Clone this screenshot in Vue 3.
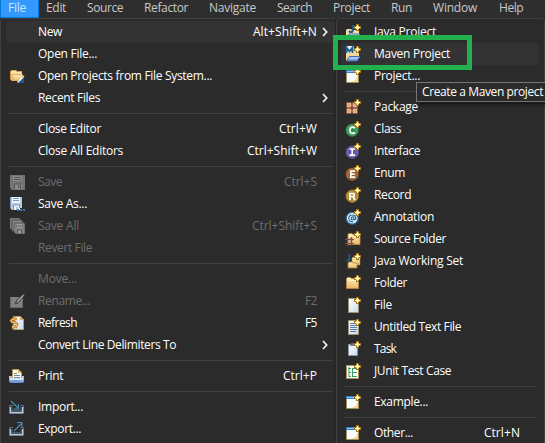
<script setup>
const menus = [
  ['File', 18, 8], ['Edit', 20, 46], ['Source', 36, 87], ['Refactor', 44, 144], ['Navigate', 47, 209], ['Search', 35, 277],
  ['Project', 37, 333], ['Run', 21, 391], ['Window', 44, 433], ['Help', 24, 499]
].map(([text, width, x], i, all) => ({ text, width, gap: i ? x - all[i - 1][2] - all[i - 1][1] : x }))

const item = (text, width, icon, keys, keysWidth, extra) => ({ text, width, icon, keys, keysWidth, ...extra })
const sep = { separator: true }
const off = { disabled: true }
const sub = { submenu: true }

const fileMenu = [
  item('New', 24, '', 'Alt+Shift+N', 64, { submenu: true, active: true }),
  item('Open File...', 59),
  item('Open Projects from File System...', 174, 'openFolder'),
  item('Recent Files', 62, '', '', 0, sub),
  sep,
  item('Close Editor', 63, '', 'Ctrl+W', 38),
  item('Close All Editors', 85, '', 'Ctrl+Shift+W', 70),
  sep,
  item('Save', 24, 'save', 'Ctrl+S', 33, off),
  item('Save As...', 49, 'saveAs'),
  item('Save All', 41, 'saveAll', 'Ctrl+Shift+S', 65, off),
  item('Revert File', 54, '', '', 0, off),
  sep,
  item('Move...', 39, '', '', 0, off),
  item('Rename...', 52, 'rename', 'F2', 12, off),
  item('Refresh', 39, 'refresh', 'F5', 12),
  item('Convert Line Delimiters To', 138, '', '', 0, sub),
  sep,
  item('Print', 25, 'print', 'Ctrl+P', 34),
  sep,
  item('Import...', 45, 'import'),
  item('Export...', 43, 'export')
]

const newMenu = [
  item('Java Project', 62, 'java'),
  item('Maven Project', 76, 'maven', '', 0, { active: true }),
  item('Project...', 46, 'window'),
  sep,
  item('Package', 44, 'package'),
  item('Class', 27, 'class'),
  item('Interface', 46, 'interface'),
  item('Enum', 31, 'enum'),
  item('Record', 37, 'record'),
  item('Annotation', 60, 'annotation'),
  item('Source Folder', 72, 'source'),
  item('Java Working Set', 89, 'workingSet'),
  item('Folder', 33, 'folder'),
  item('File', 18, 'file'),
  item('Untitled Text File', 87, 'text'),
  item('Task', 22, 'task'),
  item('JUnit Test Case', 77, 'junit'),
  sep,
  item('Example...', 54, 'window'),
  sep,
  item('Other...', 39, 'window', 'Ctrl+N', 36)
]

const plus = '<path d="M11 0h3v2h2v3h-2v2h-3v-2h-2v-3h2z" fill="#a07822"/><path d="M12 1h1v2h2v1h-2v2h-1v-2h-2v-1h2z" fill="#fffbe0"/><path d="M11 2h1v1h-1zM13 2h1v1h-1zM11 4h1v1h-1zM13 4h1v1h-1z" fill="#f0d27a"/>'
const ball = (fill, edge, glyph) =>
  `<circle cx="7.2" cy="9.2" r="6.2" fill="url(#${fill})" stroke="${edge}" stroke-width=".8"/><path d="${glyph}" fill="none" stroke="#fff" stroke-width="1.7"/>${plus}`
const folder = '<path d="M1.5 3.5l1-1h3l1 1h7v10h-12z" fill="url(#gold)" stroke="#c08a42" stroke-width=".8"/><path d="M2 5.5h11" stroke="#fff0bd"/>'
const page = '<path d="M3.5 1.5h10v14h-10z" fill="url(#paper)" stroke="#9c946f"/>'
const floppy = '<path d="M1 1h15v15h-13l-2-2z" fill="#747474"/><path d="M4 2h9v5h-9zM5 10h8v5h-8z" fill="#8b8b8b"/><path d="M5 3.5h7M5 5.5h7M5.5 15v-5h6v5M9.5 11v3" fill="none" stroke="#555"/>'

const icons = {
  openFolder: '<path d="M1 3h1l1-1h4l1 1h5v10h-10l-2-2z" fill="url(#gold)"/><path d="M1.5 11V3.5l2-1h3l1 1h5v1" fill="none" stroke="#d69b52"/><path d="M2.5 6.5h11v6h-9z" fill="url(#gold)" stroke="#d9a15a" stroke-width=".8"/><path d="M9 15h6V9z" fill="#175d96"/><path d="M8.5 14.5l6.5-6.5" stroke="#e6eef5" stroke-width="1.4"/>',
  save: floppy,
  saveAs: '<path d="M1 1h12v11h-3v2h-7l-2-2z" fill="#b7cae1"/><path d="M3 1h8v6h-8zM4 9h7v5h-7z" fill="#eef5fa"/><path d="M4 2.5h6M4 4.5h6M4.5 14v-5h6v3M8 11v3M1.5 1v11" fill="none" stroke="#7c9abd"/><path d="M8 13h2v2h-2zM11 13h2v2h-2zM14 13h2v2h-2z" fill="#3976c0"/>',
  saveAll: '<path d="M1 0h9l2 2v9h-11z" fill="#777"/><path d="M3 2h9l2 2v9h-11z" fill="#858585" stroke="#555"/><path d="M6 5h9l1 1v10h-9l-2-2v-9z" fill="#808080" stroke="#555" stroke-width=".7"/><path d="M8 6h5v4h-5zM8 12h5v3h-5z" fill="#a0a0a0"/><path d="M8 8h5M8.5 15v-3h4v3" stroke="#555" fill="none"/>',
  rename: '<path d="M1 4h13v11h-13z" fill="#818181"/><path d="M1.5 5v9.5h12V8" fill="none" stroke="#666"/><path d="M6 11l2-4 6-6 2 1-7 8z" fill="#888" stroke="#3b3b3b"/><path d="M9 8.5l5-5.5" stroke="#aaa"/>',
  refresh: '<path d="M4.5 1.5h7l3 3v10h-10z" fill="url(#paper)" stroke="#b0a070"/><path d="M11 1v4h4" fill="#cfac5b"/><path d="M8 4h-4.500l-1.500 1.800 1.500 1.700h2.500l2 1.500-1 3h-4" fill="none" stroke="#a96f24" stroke-width="2.6"/><path d="M5 2v4M4 10v4" stroke="#a96f24" stroke-width="2.4"/><path d="M8 4h-4.500l-1.500 1.800 1.500 1.700h2.500l2 1.500-1 3h-4M5 2.500v3M4 10.500v3" fill="none" stroke="#f3c06a" stroke-width="1.200"/>',
  print: '<path d="M0 8h3V6h10v2h2v6l-2 1h-11l-2-1z" fill="url(#blue)"/><path d="M3.5 1.5h6l3 3v6h-9z" fill="#fffbe9" stroke="#b99a58"/><path d="M9 1v4h3" fill="#d9b45b"/><path d="M5 5.5h3M5 7.5h6M5 9.5h6" stroke="#7187ae"/><path d="M1 11h13" stroke="#d7e7fa" stroke-width="2"/>',
  import: '<path d="M4 6.500h-3.500v8h14v-8h-3" fill="none" stroke="#53708f"/><path d="M1.500 8v5.500h12v-5.500" fill="none" stroke="#bccbdc" stroke-width="1.400"/><path d="M3 7.500v4h9v-4" fill="none" stroke="#53708f" stroke-width=".7"/><path d="M2 2l7 7M9.5 5v5h-5" fill="none" stroke="#4e8baf" stroke-width="1.2"/>',
  export: '<path d="M4 6.500h-3.500v8h14v-8h-3" fill="none" stroke="#53708f"/><path d="M1.500 8v5.500h12v-5.500" fill="none" stroke="#bccbdc" stroke-width="1.400"/><path d="M3 7.500v4h9v-4" fill="none" stroke="#53708f" stroke-width=".7"/><path d="M5 10l7.500-7.500M8 1.5h5v5" fill="none" stroke="#4e8baf" stroke-width="1.2"/>',
  java: `<path d="M1 6l1-1h4l1 1h7v4l-2 5h-11z" fill="#f5dda1"/><path d="M4 10h11l-3 5h-11z" fill="url(#blue)" stroke="#4d72af"/><path d="M8 1v5l-1 2h-2l-1-1" fill="none" stroke="#215a91" stroke-width="1.900"/>${plus}`,
  maven: `<path d="M1 4h13v6l-2 5h-11z" fill="#f6d99c"/><path d="M4.5 10.500h10.500l-3 4.500h-10.500z" fill="url(#blue)" stroke="#3f67b3"/><path d="M1 0h8v7h-8z" fill="#e6eef0"/><path d="M1.500 7V1.500l3 4 3-4V7" fill="none" stroke="#17618f" stroke-width="1.9"/>${plus}`,
  window: `<path d="M1.5 2.5h12v12h-12z" fill="#f5fbff" stroke="#a48e55"/><path d="M1 2h13v3h-13z" fill="#3681c4"/><path d="M2 3.5h8" stroke="#8dc5ed"/><path d="M13 5v9h-7q7-2 7-9" fill="#f3dba0"/>${plus}`,
  package: `<path d="M1.500 3.500h5v5h-5zM7.500 3.500h5v5h-5zM1.500 9.500h5v5h-5zM7.500 9.500h5v5h-5z" fill="#edc89c" stroke="#8b523b"/><path d="M4 4v10M10 4v10M2 6h10M2 12h10" stroke="#d99b72" stroke-width=".8"/>${plus}`,
  class: ball('green', '#247a42', 'M10 7q-3-1.800-4.500 0-1.300 2.300 0 4.500 1.600 1.600 4.500 0'),
  interface: ball('purple', '#594596', 'M4.500 6h5.500M7.200 6v6M4.500 12.200h5.500'),
  enum: ball('brown', '#8a5028', 'M10 6.200h-4.200v6h4.200M6 9.200h3.700'),
  record: ball('ochre', '#9b7625', 'M5 13V6.500h3.500q1.500 1.500 0 3h-3M8 9.500l2 3.500'),
  annotation: `<circle cx="7.2" cy="9.2" r="6" fill="#e9f3f8" stroke="#246292" stroke-width="1.3"/><path d="M8.800 7.500v3q2 1 2-1.500 0-3-3.500-3-3.500 0-3.500 3.500t4.500 3.300M8.500 8q-2-.8-2.200 1.500 0 2 2.200.8" fill="none" stroke="#206598" stroke-width="1.2"/>${plus}`,
  source: `<g transform="translate(1.500,0)">${folder}</g><path d="M2 7h6v6h-6z" fill="#d6ac8b"/><path d="M2.500 6v9M6.500 6v9M0 8.500h9M0 12.500h9" stroke="#7c5040" stroke-width="1.2"/>${plus}`,
  workingSet: `<path d="M4.5 1v4.500l-1 2h-2" fill="none" stroke="#285b8d" stroke-width="1.8"/><path d="M7 5l1-1h6l1 1v7h-8z" fill="url(#gold)" stroke="#b88142" stroke-width=".6"/><path d="M3 10l1-1h3l1 1h4v5h-9z" fill="url(#gold)" stroke="#b88142" stroke-width=".8"/>${plus}`,
  folder: folder + plus,
  file: page + plus,
  text: `${page}<path d="M5 4.500h4M5 6.5h6M5 8.5h7M5 10.5h7M5 12.5h6" stroke="#5478ab"/>${plus}`,
  task: `<path d="M3.5 3.5h9v11h-9z" fill="url(#paper)" stroke="#8c94a3"/><path d="M5 4q0-2 3-2l3 2v1h-6z" fill="#6c7b91"/>${plus}`,
  junit: `<path d="M1.500 2.5h12v13h-12z" fill="#f7fff5" stroke="#ae9155"/><path d="M4 4v10M3 5.5h3M7 5.500h4M4 9.5h2M7 9.5h5M4 13.5h2M7 13.500h5M7.500 5v9" fill="none" stroke="#3b9a68"/>${plus}`
}

const vFit = {
  mounted(el, { value }) {
    if (!value) return
    const natural = el.getBoundingClientRect().width
    el.style.letterSpacing = `${(value + 0.1 - natural) / el.textContent.length}px`
  }
}
</script>

<template>
  <main class="screen">
    <svg class="defs" width="0" height="0">
      <defs>
        <linearGradient id="gold" x2="0" y2="1"><stop stop-color="#fff0bb" /><stop offset="1" stop-color="#e9b768" /></linearGradient>
        <linearGradient id="paper" x2="1" y2="1"><stop stop-color="#fff" /><stop offset="1" stop-color="#cbd9ed" /></linearGradient>
        <linearGradient id="blue" x2="0" y2="1"><stop stop-color="#cde2fb" /><stop offset="1" stop-color="#648ed0" /></linearGradient>
        <radialGradient id="green"><stop stop-color="#268344" /><stop offset="1" stop-color="#4fa568" /></radialGradient>
        <radialGradient id="purple"><stop stop-color="#5144a0" /><stop offset="1" stop-color="#7b69ba" /></radialGradient>
        <radialGradient id="brown"><stop stop-color="#8d4e22" /><stop offset="1" stop-color="#ae7645" /></radialGradient>
        <radialGradient id="ochre"><stop stop-color="#9b7720" /><stop offset="1" stop-color="#bd9d48" /></radialGradient>
      </defs>
    </svg>
    <nav class="menubar">
      <div v-for="(m, i) in menus" :key="m.text" class="top" :class="{ open: !i }" :style="{ paddingLeft: m.gap + 'px', width: m.gap + m.width + 'px' }">
        <span v-fit="m.width">{{ m.text }}</span>
      </div>
    </nav>
    <div class="panels">
      <section v-for="(list, n) in [fileMenu, newMenu]" :key="n" class="panel" :class="n ? 'new-menu' : 'file-menu'">
        <template v-for="(row, i) in list" :key="i">
          <div v-if="row.separator" class="separator"></div>
          <div v-else class="row" :class="{ active: row.active, disabled: row.disabled }">
            <svg class="icon" viewBox="0 0 16 16" v-html="icons[row.icon] || ''"></svg>
            <span v-fit="row.width" class="label">{{ row.text }}</span>
            <span v-if="row.keys" v-fit="row.keysWidth" class="keys">{{ row.keys }}</span>
            <svg v-if="row.submenu" class="arrow" viewBox="0 0 6 10"><path d="M1 1l3.700 4L1 9" /></svg>
          </div>
        </template>
      </section>
    </div>
    <div class="marker"></div>
    <div class="tooltip"><span v-fit="121">Create a Maven project</span></div>
  </main>
</template>

<style>
body { overflow: hidden; background: #2b2b2b; }
</style>

<style scoped>
.screen { position: relative; width: 545px; height: 443px; overflow: hidden; background: #2b2b2b; color: #fff; font: 12px/22px "Open Sans", "Noto Sans", sans-serif; white-space: pre; }
.defs { position: absolute; }
.menubar { display: flex; height: 18px; background: #2e2e2e; color: #c9c9c9; line-height: 16px; }
.top { box-sizing: border-box; flex: none; }
.top.open { position: relative; color: #d2e5f8; }
.top.open::before { content: ""; position: absolute; left: 0; top: 0; box-sizing: border-box; width: 39px; height: 18px; background: #3399ff; border: solid #0078d7; border-width: 0 1px 1px; }
.top.open span { position: relative; }
.panels { display: flex; height: 425px; }
.panel { box-sizing: border-box; flex: none; height: 440px; border: 1px solid #3f3f3f; background: #2b2b2b; }
.file-menu { width: 336px; padding: 2px 0 0 5px; border-top-left-radius: 4px; border-right-color: #252525; }
.new-menu { width: 209px; padding: 2px 5px 0 4px; border-radius: 4px; }
.row { display: flex; align-items: center; height: 22px; border-radius: 4px; }
.row.active { background: #333; }
.row.disabled { color: #6d6d6d; }
.icon { flex: none; width: 16px; height: 16px; margin-left: 3px; }
.new-menu .icon { margin-left: 4px; }
.label { margin-left: 13px; }
.file-menu .row { width: 329px; position: relative; }
.keys { margin-left: auto; margin-right: 19px; }
.file-menu .keys { margin-right: 18px; }
.row:has(.arrow) .keys { margin-right: 5px; }
.arrow { width: 6px; height: 10px; margin-left: auto; margin-right: 7px; fill: none; stroke: #f2f2f2; stroke-width: 1.7; }
.keys + .arrow { margin-left: 0; }
.separator { height: 1px; margin: 4px 8px 4px 4px; background: #414141; }
.file-menu .separator { margin: 4px 2px 4px 3px; }
.new-menu .separator { margin: 4px 3px 4px 4px; }
.marker { position: absolute; left: 333px; top: 35px; box-sizing: border-box; width: 139px; height: 35px; border: 5px solid #22b14c; }
.tooltip { position: absolute; left: 416px; top: 82px; box-sizing: border-box; width: 135px; height: 20px; padding-left: 5px; border: 1px solid #767676; background: #2b2b2b; line-height: 18px; box-shadow: 3px 3px 3px #191919; }
</style>
